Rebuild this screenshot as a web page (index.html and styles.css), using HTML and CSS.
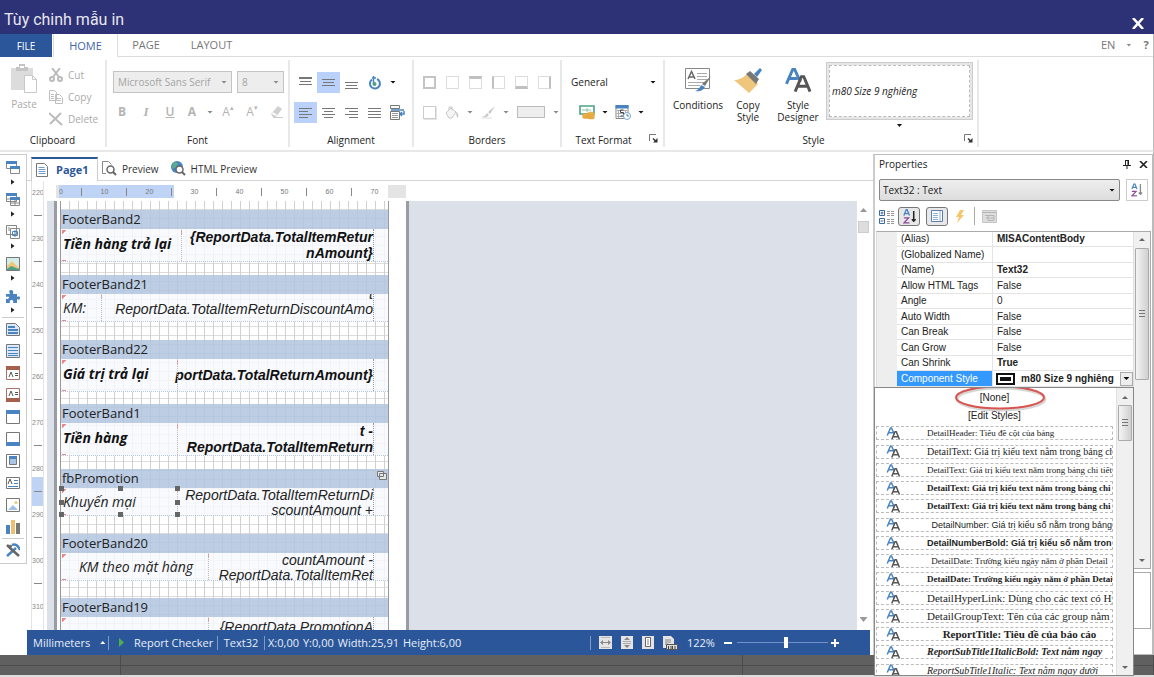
FILE: index.html
```html
<!DOCTYPE html>
<html lang="vi">
<head>
<meta charset="utf-8">
<title>Tùy chinh mẫu in</title>
<link rel="stylesheet" href="styles.css">
</head>
<body>
<svg class="defs" aria-hidden="true">
  <symbol id="aa" viewBox="0 0 28 26"><g fill="none" stroke-width="3"><path stroke="#4a84c0" d="M1.500 17 8 2h2l6 13M4 11.500h9"/><path stroke="#555" d="M10.500 25 17 9.500h2.500L26 25M13 19.500h11"/></g></symbol>
  <symbol id="launch" viewBox="0 0 9 9"><path fill="none" stroke="#777" d="M.5 7V.5H7"/><path fill="#333" d="M8.500 4v4.500H4L5.500 7 3.500 5l1-1 2 2z"/></symbol>
  <symbol id="sort" viewBox="0 0 14 16"><g fill="none" stroke-width="1.400"><path stroke="#4a84c0" d="M1 7 3.500.8h1L7 7M2 5h4"/><path stroke="#8c4a9c" d="M1 9.500h5L1.200 14.800H7"/></g></symbol>
  <symbol id="doc" viewBox="0 0 12 14"><path fill="#fff" stroke="#777" d="M.5.5h8l3 3v10H.5z"/><path stroke="#6d9bd0" d="M2.500 4.500h6m-6 2h7m-7 2h7m-7 2h7"/></symbol>
</svg>

<header class="titlebar">
  <h1>Tùy chinh mẫu in</h1>
  <button class="close" aria-label="Close"><svg width="12" height="11" viewBox="0 0 12 11"><path d="M1 0 11 11M11 0 1 11" stroke="#fff" stroke-width="2.600"/></svg></button>
</header>

<nav class="tabs">
  <button class="tab file">FILE</button>
  <button class="tab active">HOME</button>
  <button class="tab">PAGE</button>
  <button class="tab wide">LAYOUT</button>
  <span class="tabs-fill"></span>
  <button class="tab lang">EN <i class="caret small"></i></button>
  <button class="tab help" aria-label="Help">?</button>
</nav>

<section class="ribbon">
  <div class="group clipboard">
    <div class="group-body">
      <button class="paste"><svg width="26" height="30" viewBox="0 0 26 30"><path fill="#dcdcdc" d="M0 4h22v7h-8v15H0z"/><path fill="#c4c4c4" d="M5 3h3V0h6v3h3v4H5z"/><path fill="#fff" d="M9 2h4v2H9z"/><path fill="#fff" stroke="#c8c8c8" d="M13.500 11.500h8l4 4v13h-12z"/><path fill="none" stroke="#c8c8c8" d="M21.500 11.500v4h4"/></svg>Paste</button>
      <div class="stack">
        <button><svg width="14" height="14" viewBox="0 0 14 14"><g fill="none" stroke="#bbb" stroke-width="2"><path d="M3 0l7 9M11 0 4 9"/><circle cx="3" cy="11" r="2"/><circle cx="11" cy="11" r="2"/></g></svg>Cut</button>
        <button><svg width="14" height="14" viewBox="0 0 14 14"><g fill="#fff" stroke="#c0c0c0"><path d="M.5.5h5l2 2v8h-7zM6.500 4.500h4l3 3v6h-7z"/><path d="M2 4.500h3m-3 2h3m-3 2h3M8 8.500h4m-4 2h4"/></g></svg>Copy</button>
        <button><svg width="14" height="14" viewBox="0 0 14 14"><path d="M0 1 13 13M12 1 1 12" stroke="#bbb" stroke-width="2"/></svg>Delete</button>
      </div>
    </div>
    <div class="group-label">Clipboard</div>
  </div>

  <div class="group font">
    <div class="group-body rows">
      <div class="row fonts">
        <label class="combo family"><select aria-label="Font family"><option>Microsoft Sans Serif</option></select><i class="caret"></i></label>
        <label class="combo size"><select aria-label="Font size"><option>8</option></select><i class="caret"></i></label>
      </div>
      <div class="row glyphs">
        <button class="b">B</button><button class="i">I</button><button class="u">U</button><button class="b ink">A</button><i class="caret"></i>
        <button>A<sup>▴</sup></button><button>A<sup>▾</sup></button>
        <button aria-label="Clear"><svg width="13" height="12" viewBox="0 0 13 12"><path fill="#d0d0d0" d="M1 8 8 0l4 3-6 8H3z"/><path fill="#fff" d="m3 6 4 3-1 1-4-2z"/><path stroke="#ccc" d="M3 11.500h10"/></svg></button>
      </div>
    </div>
    <div class="group-label">Font</div>
  </div>

  <div class="group alignment">
    <div class="group-body rows">
      <div class="row cells">
        <button aria-label="Top"><svg width="13" height="13"><path stroke="#777" d="M0 1.500h13"/><path stroke="#777" d="M0 2.500h13M1 5.500h11M0 8.500h13"/></svg></button>
        <button class="on" aria-label="Middle"><svg width="13" height="13"><path stroke="#777" d="M0 3.500h13M1 6.500h11M0 9.500h13"/></svg></button>
        <button aria-label="Bottom"><svg width="13" height="13"><path stroke="#777" d="M0 6.500h13M1 9.500h11M0 12.500h13"/></svg></button>
        <button aria-label="Rotate"><svg width="14" height="15" viewBox="0 0 14 15"><path fill="none" stroke="#4a84c0" stroke-width="2" d="M4 4.500A5 5 0 1 0 9 4"/><path fill="none" stroke="#4a84c0" stroke-width="1.500" d="M4 3h4M5.500 1v8"/><circle cx="6.500" cy="9" r="2" fill="#4ca384"/></svg></button>
        <i class="caret dark"></i>
      </div>
      <div class="row cells">
        <button class="on" aria-label="Left"><svg width="13" height="13"><path stroke="#777" d="M0 2.500h13M0 5.500h9M0 8.500h13M0 11.500h9"/></svg></button>
        <button aria-label="Center"><svg width="13" height="13"><path stroke="#777" d="M0 2.500h13M2 5.500h9M0 8.500h13M2 11.500h9"/></svg></button>
        <button aria-label="Right"><svg width="13" height="13"><path stroke="#777" d="M0 2.500h13M4 5.500h9M0 8.500h13M4 11.500h9"/></svg></button>
        <button aria-label="Justify"><svg width="13" height="13"><path stroke="#777" d="M0 2.500h13M0 5.500h13M0 8.500h13M0 11.500h13"/></svg></button>
        <button aria-label="Wrap"><svg width="15" height="15" viewBox="0 0 15 15"><path fill="#fff" stroke="#777" d="M.5.500h9v3h-9zM.5 6.500h9v8h-9z"/><path stroke="#999" d="M2 8.500h6m-6 2h6m-6 2h6"/><path fill="none" stroke="#4a84c0" stroke-width="1.500" d="M1 5h13M14 6v3h-4m2-2-2 2 2 2"/></svg></button>
      </div>
    </div>
    <div class="group-label">Alignment</div>
  </div>

  <div class="group borders">
    <div class="group-body rows">
      <div class="row cells">
        <button aria-label="All borders"><i class="box all"></i></button>
        <button aria-label="No border"><i class="box"></i></button>
        <button aria-label="Top border"><i class="box t"></i></button>
        <button aria-label="Left border"><i class="box l"></i></button>
        <button aria-label="Bottom border"><i class="box bt"></i></button>
        <button aria-label="Right border"><i class="box r"></i></button>
      </div>
      <div class="row paint">
        <button class="cell" aria-label="Shadow"><i class="box sh"></i></button>
        <button aria-label="Fill"><svg width="14" height="13" viewBox="0 0 14 13"><path fill="#f4f4f4" stroke="#c8c8c8" d="m1 7 5-5 5 4-4 6H4zM4 4V1h3v3"/><path fill="#c4c4c4" d="M11 6q3 1 2 6-2-2-2-6z"/></svg></button><i class="caret"></i>
        <button aria-label="Border colour"><svg width="14" height="13" viewBox="0 0 14 13"><path fill="#c8c8c8" d="M14 0 9 8l-2-2zM6 7l2 2q-2 3-8 2 4 0 6-4z"/><path stroke="#ddd" d="M1 12h10"/></svg></button><i class="caret"></i>
        <button aria-label="Border style"><i class="swatch"></i></button><i class="caret"></i>
      </div>
    </div>
    <div class="group-label">Borders</div>
  </div>

  <div class="group format">
    <div class="group-body rows">
      <div class="row"><label class="combo plain"><select aria-label="Text format"><option>General</option></select><i class="caret dark"></i></label></div>
      <div class="row formats">
        <button aria-label="Currency"><svg width="16" height="15" viewBox="0 0 16 15"><path fill="#fff" stroke="#4ca384" stroke-width="1.600" d="M1 1h14v8H1z"/><path stroke="#8cc4ae" d="M3 5h9M8 3v4"/><g fill="#ecb24a" stroke="#d8942c" stroke-width=".5"><ellipse cx="12" cy="12.500" rx="3.500" ry="1.500"/><ellipse cx="12" cy="10.500" rx="3.500" ry="1.500"/><ellipse cx="12" cy="8.500" rx="3.500" ry="1.500"/><ellipse cx="7" cy="12" rx="3.500" ry="1.500"/><ellipse cx="6.500" cy="10" rx="3" ry="1.500"/></g></svg></button><i class="caret dark"></i>
        <button aria-label="Date"><svg width="16" height="15" viewBox="0 0 16 15"><path fill="#fff" stroke="#888" d="M1 .5h12v13H1z"/><path fill="#4a84c0" d="M.5 0h13v3.500H.5z"/><path stroke="#aaa" d="M2 5.500h10M2 8.500h10M2 11.500h8M3.500 5v8M10.500 5v4"/><path fill="none" stroke="#444" d="M8.500 5h-3v2.500h3V11h-3"/><circle cx="12" cy="11" r="3.500" fill="#fff" stroke="#7da6d4"/><path fill="none" stroke="#4a84c0" d="M12 9v2h2"/></svg></button><i class="caret dark"></i>
      </div>
    </div>
    <div class="group-label">Text Format<button class="launcher" aria-label="Text format options"><svg width="9" height="9"><use href="#launch"/></svg></button></div>
  </div>

  <div class="group style">
    <div class="group-body">
      <button class="big"><svg width="26" height="26" viewBox="0 0 26 26"><path fill="#fff" stroke="#888" d="M.5 1.500h24v20H.5z"/><path stroke="#aaa" d="M12 6.500h10M12 9.500h10M12 12.500h10M3 15.500h18M3 18.500h12"/><path fill="none" stroke="#666" stroke-width="1.500" d="M3 12 6.500 4.500 10 12M4.500 10h4"/><path fill="#777" d="m26 9-6 10-3-2z"/><path fill="#4a84c0" d="m16 18 4 2q-2 5-10 4 4-1 6-6z"/></svg>Conditions</button>
      <button class="big"><svg width="28" height="26" viewBox="0 0 28 26"><path fill="#eec77c" d="M0 13q7 0 13-6l11 10-9 9z"/><path fill="#777" d="m12 7 4-3 9 8-3 5z"/><path fill="#4a84c0" d="m20 7 6-6 2 2-5 7z"/></svg>Copy<br>Style</button>
      <button class="big"><svg width="27" height="26"><use href="#aa"/></svg>Style<br>Designer</button>
      <div class="gallery-wrap">
        <button class="gallery"><span>m80 Size 9 nghiêng</span></button>
        <i class="caret dark small"></i>
      </div>
    </div>
    <div class="group-label">Style<button class="launcher" aria-label="Style options"><svg width="9" height="9"><use href="#launch"/></svg></button></div>
  </div>
</section>

<main class="workspace">
  <aside class="toolbox">
    <button><svg viewBox="0 0 14 14"><path fill="#fff" stroke="#888" d="M.5.5h10v7H.5zM4.500 5.500h9v7h-9z"/><path fill="#4a84c0" d="M0 0h11v3H0zM4 5h10v3H4z"/></svg></button><i class="more"></i>
    <button><svg viewBox="0 0 14 14"><path fill="#fff" stroke="#888" d="M.5.5h10v8H.5zM4.500 4.500h9v8h-9zM4 10h10M9 5v8M1 6h4"/><path fill="#4a84c0" d="M0 0h11v3H0zM4 4h10v3H4z"/></svg></button><i class="more"></i>
    <button><svg viewBox="0 0 14 14"><path fill="#fff" stroke="#888" d="M.5.5h10v9H.5zM4.500 3.500h9v10h-9z"/><path stroke="#888" d="M2 3h2M2 5h2"/><path fill="none" stroke="#4a84c0" d="M6.500 6.500h5v4h-5zM9 5v7"/></svg></button><i class="more"></i>
    <button><svg viewBox="0 0 14 14"><path fill="#d3eeea" stroke="#777" d="M.5.500h13v13H.5z"/><path fill="#eec77c" d="m1 9 5-5 7 7v2H1z"/><path fill="#4ca384" d="m1 12 4-3 8 3v1H1z"/></svg></button><i class="more"></i>
    <button><svg viewBox="0 0 14 14"><path fill="#4a84c0" d="M0 5h4Q2 1 5 1t2 4h4v3q3-2 3 1t-3 1v4H7q1-3-1.500-3T4 14H0v-4q3 0 3-1.500T0 8z"/></svg></button><i class="more"></i>
    <hr>
    <button><svg viewBox="0 0 14 14"><path fill="#dce9f8" stroke="#777" d="M.5 1.500h9l4 4v8H.5z"/><path stroke="#4a84c0" stroke-width="2" d="M2 5h7M2 8h10M2 11h10"/></svg></button>
    <button><svg viewBox="0 0 14 14"><path fill="#dce9f8" stroke="#777" d="M.5.500h13v13H.5z"/><path stroke="#4a84c0" d="M2 3.500h10M2 6.500h10M2 9.500h10M2 11.500h10"/></svg></button>
    <button><svg viewBox="0 0 14 14"><path fill="#fff" stroke="#a87068" d="M.5.500h13v13H.5z"/><path fill="#a6604e" d="M0 0h14v4H0z"/><path fill="none" stroke="#555" d="m3 11 2-5 2 5M9 7.500h3M9 9.500h3"/></svg></button>
    <button><svg viewBox="0 0 14 14"><path fill="#fff" stroke="#a87068" d="M.5.500h13v13H.5z"/><path fill="#a6604e" d="M0 10h14v4H0z"/><path fill="none" stroke="#555" d="m3 8 2-5 2 5M9 4.500h3M9 6.500h3"/></svg></button>
    <button><svg viewBox="0 0 14 14"><path fill="#fff" stroke="#777" d="M.5.500h13v13H.5z"/><path fill="#4a84c0" d="M0 0h14v4H0z"/></svg></button>
    <button><svg viewBox="0 0 14 14"><path fill="#fff" stroke="#777" d="M.5.500h13v13H.5z"/><path fill="#4a84c0" d="M0 10h14v4H0z"/></svg></button>
    <button><svg viewBox="0 0 14 14"><path fill="#fff" stroke="#777" d="M.5.500h13v13H.5z"/><path fill="#a9c6e6" stroke="#777" d="M3.500 3.500h7v7h-7z"/><path fill="#4a84c0" d="M3 2h8v3H3z"/></svg></button>
    <button><svg viewBox="0 0 14 14"><path fill="#fff" stroke="#777" d="M.5 1.500h13v11H.5z"/><path fill="none" stroke="#555" d="m2 8 2-5 2 5"/><path stroke="#4a84c0" d="M8 4.500h4M8 7.500h4M2 10.500h10"/></svg></button>
    <button><svg viewBox="0 0 14 14"><path fill="#fff" stroke="#777" d="M.5.500h13v13H.5z"/><path fill="#9fc0e4" d="m2 12 5-5 5 5z"/><circle cx="10" cy="4.500" r="1.500" fill="#eec77c"/></svg></button>
    <button><svg viewBox="0 0 14 14"><path fill="#4a84c0" d="M0 5h4v9H0z"/><path fill="#eebf6c" d="M5 0h4v14H5z"/><path fill="#777" d="M10 3h4v11h-4z"/></svg></button>
    <hr>
    <button><svg viewBox="0 0 14 14"><path stroke="#4a84c0" stroke-width="2.500" d="m1 13 9-8M6 2q5-2 8 5" fill="none"/><path fill="none" stroke="#666" stroke-width="2.500" d="m4 5 9 8M1 2l3 3 1-3"/></svg></button>
  </aside>

  <section class="designer">
    <nav class="doc-tabs">
      <button class="current"><svg width="12" height="14"><use href="#doc"/></svg>Page1</button>
      <button><svg width="15" height="15" viewBox="0 0 15 15"><path fill="none" stroke="#888" d="M4 12.500H.5V.500h6l3 3"/><circle cx="8.500" cy="8.500" r="3.500" fill="#fff" stroke="#666" stroke-width="1.500"/><path stroke="#666" stroke-width="2" d="m11 11 3 3"/></svg>Preview</button>
      <button><svg width="15" height="15" viewBox="0 0 15 15"><circle cx="6" cy="6" r="6" fill="#4a84c0"/><path fill="#5caf8a" d="M2 2q4-2 5 1L5 6 1 8z"/><circle cx="8.500" cy="8.500" r="3.500" fill="#fff" stroke="#666" stroke-width="1.500"/><path stroke="#666" stroke-width="2" d="m11 11 3 3"/></svg>HTML Preview</button>
    </nav>
    <div class="sheet">
      <div class="vruler">
        <span>220</span><i></i><span>230</span><i></i><span>240</span><i></i><span>250</span><i></i><span>260</span><i></i><span>270</span><i></i><span>280</span><i class="sel"></i><span>290</span><i></i><span>300</span><i></i><span>310</span>
      </div>
      <div class="view">
        <div class="hruler"><div class="scale"><span>0</span><span>10</span><span>20</span><span>30</span><span>40</span><span>50</span><span>60</span><span>70</span></div></div>
        <div class="canvas">
          <div class="page">
            <div class="printable">
              <section class="band"><h2>FooterBand2</h2><div class="band-body">
                <div class="fields tall"><div class="fld w121 strong">Tiền hàng trả lại</div><div class="expr strong">{ReportData.TotalItemRetur<br>nAmount}</div></div></div></section>
              <section class="band"><h2>FooterBand21</h2><div class="band-body">
                <div class="fields"><div class="fld w41">KM:</div><div class="expr last">t<br>ReportData.TotalItemReturnDiscountAmo</div></div></div></section>
              <section class="band short"><h2>FooterBand22</h2><div class="band-body">
                <div class="fields tall"><div class="fld w117 strong">Giá trị trả lại</div><div class="expr strong mid">portData.TotalReturnAmount}</div></div></div></section>
              <section class="band"><h2>FooterBand1</h2><div class="band-body">
                <div class="fields tall"><div class="fld w117 strong">Tiền hàng</div><div class="expr strong">t -<br>ReportData.TotalItemReturn</div></div></div></section>
              <section class="band"><h2>fbPromotion<svg width="10" height="9" viewBox="0 0 10 9"><path fill="#e8e8e8" stroke="#777" d="M.5.500h6v5h-6zM2.500 2.500h7v6h-7z"/></svg></h2><div class="band-body">
                <div class="fields"><div class="fld w117 picked">Khuyến mại<b class="h a"></b><b class="h c"></b><b class="h d"></b><b class="h e"></b><b class="h f"></b><b class="h g"></b><b class="h k"></b><b class="h m"></b></div><div class="expr">ReportData.TotalItemReturnDi<br>scountAmount +</div></div></div></section>
              <section class="band short"><h2>FooterBand20</h2><div class="band-body">
                <div class="fields"><div class="fld w148 indent">KM theo mặt hàng</div><div class="expr">countAmount -<br>ReportData.TotalItemRet</div></div></div></section>
              <section class="band"><h2>FooterBand19</h2><div class="band-body">
                <div class="fields"><div class="fld w148"></div><div class="expr lead">{ReportData.PromotionA</div></div></div></section>
            </div>
          </div>
        </div>
      </div>
      <div class="vscroll"><i class="up"></i><i class="thumb"></i><i class="down"></i></div>
    </div>
    <footer class="status">
      <button class="unit">Millimeters <i class="up"></i></button>
      <button class="check"><i class="play"></i>Report Checker</button>
      <span class="name">Text32</span>
      <span class="pos"><span>X:0,00</span><span>Y:0,00</span><span>Width:25,91</span><span>Height:6,00</span></span>
      <span class="zooms">
        <button aria-label="Page width"><svg width="13" height="13" viewBox="0 0 13 13"><path fill="#e4e4e4" d="M0 0h13v13H0z"/><path fill="#888" d="M1 6.500 4 4v5zM12 6.500 9 4v5zM4 6h5v1H4z"/><path stroke="#bbb" d="M2 1.500h9M2 11.500h9"/></svg></button>
        <button aria-label="Page height"><svg width="12" height="13" viewBox="0 0 12 13"><path fill="#e4e4e4" d="M0 0h12v13H0z"/><path fill="#888" d="m6 1 3 3H3zM6 12l3-3H3z"/><path stroke="#aaa" d="M2 5.500h8M2 7.500h8"/></svg></button>
        <button aria-label="Whole page"><svg width="12" height="13" viewBox="0 0 12 13"><path fill="#e4e4e4" d="M0 0h12v13H0z"/><path fill="#fff" stroke="#666" d="M3.500 1.500h5v9h-5z"/><path stroke="#888" d="M5 4h2M5 6h2M5 8h2"/></svg></button>
        <button aria-label="Actual size"><svg width="15" height="14" viewBox="0 0 15 14"><path fill="#e4e4e4" d="M0 0h8l3 3v9H0z"/><path stroke="#888" d="M2 4h6M2 6h6M2 8h3"/><path fill="#ddd" stroke="#555" d="M3.500 8.500h11v5h-11z"/><path stroke="#444" d="M5.500 10v3M8 10v3m1.500-3v3M12 10v3"/></svg></button>
        <span class="pct">122%</span>
        <button class="sign" aria-label="Zoom out"><svg width="8" height="8"><path stroke="#fff" stroke-width="2" d="M0 4h8"/></svg></button>
        <input type="range" aria-label="Zoom" min="0" max="100" value="54">
        <button class="sign" aria-label="Zoom in"><svg width="8" height="8"><path stroke="#fff" stroke-width="2" d="M0 4h8M4 0v8"/></svg></button>
      </span>
    </footer>
  </section>

  <aside class="properties">
    <div class="panel-head"><h2>Properties</h2>
      <button aria-label="Pin"><svg width="8" height="9" viewBox="0 0 8 9"><path fill="none" stroke="#222" d="M2.500.500h3v4M2.500 0v5M0 5.500h8M4 5v4"/><path stroke="#222" stroke-width="1.500" d="M5.200 0v5"/></svg></button>
      <button aria-label="Close panel"><svg width="9" height="7"><path stroke="#222" stroke-width="1.600" d="m1 0 7 7M8 0 1 7"/></svg></button></div>
    <div class="object-row">
      <label class="object"><select aria-label="Object"><option>Text32 : Text</option></select><i class="caret dark"></i></label>
      <button class="sorter" aria-label="Sort"><svg width="12" height="16" viewBox="0 0 14 16"><use href="#sort" width="14" height="16"/><path stroke="#888" stroke-width="1.500" d="M11 1v12m-2-2 2 2 2-2" fill="none"/></svg></button>
    </div>
    <div class="prop-tools">
      <button aria-label="Categorized"><svg width="15" height="15" viewBox="0 0 15 15"><path fill="#fff" stroke="#3c6aa0" d="M.5 1.500h5v5h-5zM.5 9.500h5v5h-5z"/><path stroke="#3c6aa0" d="M1.500 4h3M3 2.500v3M1.500 12h3"/><path stroke="#999" stroke-dasharray="3 1" d="M8 2.500h7M8 4.500h7M8 6.500h7M8 10.500h7M8 12.500h7M8 14.500h7"/></svg></button>
      <button class="down" aria-label="Alphabetical"><svg width="15" height="15" viewBox="0 0 14 16"><use href="#sort" width="14" height="16"/><path stroke="#222" stroke-width="1.600" d="M11.500 2v11m-2-2 2 2 2-2" fill="none"/></svg></button>
      <button class="down tab-view" aria-label="Properties tab"><svg width="12" height="12" viewBox="0 0 12 12"><path fill="#fff" stroke="#5a7fae" d="M.5.500h11v11H.5z"/><path stroke="#8fb2dc" d="M2 3.500h5m-5 2h5m-5 2h5m-5 2h5M9 1v10"/></svg></button>
      <button aria-label="Events"><svg width="10" height="13" viewBox="0 0 10 13"><path fill="#f7c56c" d="M5 0h4L6 5h3L2 13l2-6H1z"/></svg></button>
      <span class="vsep"></span>
      <button aria-label="Property pages"><svg width="15" height="13" viewBox="0 0 15 13"><path fill="#dedede" stroke="#c4c4c4" d="M.5.500h14v12H.5z"/><path stroke="#b4b4b4" d="M1 2.500h13M3 5.500h3v5h6v-5H6M4 8h8" fill="none"/></svg></button>
    </div>
    <div class="prop-grid">
      <div class="table-wrap">
        <table>
          <tr><th></th><td>(Alias)</td><td><b>MISAContentBody</b></td></tr>
          <tr><th></th><td>(Globalized Name)</td><td></td></tr>
          <tr><th></th><td>(Name)</td><td><b>Text32</b></td></tr>
          <tr><th></th><td>Allow HTML Tags</td><td>False</td></tr>
          <tr><th></th><td>Angle</td><td>0</td></tr>
          <tr><th></th><td>Auto Width</td><td>False</td></tr>
          <tr><th></th><td>Can Break</td><td>False</td></tr>
          <tr><th></th><td>Can Grow</td><td>False</td></tr>
          <tr><th></th><td>Can Shrink</td><td><b>True</b></td></tr>
          <tr class="sel"><th></th><td>Component Style</td><td><div class="editor"><i class="chip"></i><b>m80 Size 9 nghiêng</b><button aria-label="Open list"><i class="caret dark"></i></button></div></td></tr>
        </table>
        <div class="menu">
          <div class="options">
            <button class="plain">[None]</button>
            <button class="plain">[Edit Styles]</button>
            <button><svg><use href="#aa"/></svg><span>DetailHeader: Tiêu đề cột của bảng</span></button>
            <button class="s10"><svg><use href="#aa"/></svg><span>DetailText: Giá trị kiểu text nằm trong bảng chi t</span></button>
            <button><svg><use href="#aa"/></svg><span>DetailText: Giá trị kiểu text nằm trong bảng chi tiết</span></button>
            <button class="bold"><svg><use href="#aa"/></svg><span>DetailText: Giá trị kiểu text nằm trong bảng chi ti</span></button>
            <button class="bold"><svg><use href="#aa"/></svg><span>DetailText: Giá trị kiểu text nằm trong bảng chi t</span></button>
            <button class="sans right"><svg><use href="#aa"/></svg><span>DetailNumber: Giá trị kiểu số nằm trong bảng</span></button>
            <button class="sans bold"><svg><use href="#aa"/></svg><span>DetailNumberBold: Giá trị kiểu số nằm tron</span></button>
            <button class="center"><svg><use href="#aa"/></svg><span>DetailDate: Trường kiểu ngày nằm ở phần Detail</span></button>
            <button class="bold"><svg><use href="#aa"/></svg><span>DetailDate: Trường kiểu ngày nằm ở phần Detail</span></button>
            <button class="s11"><svg><use href="#aa"/></svg><span>DetailHyperLink: Dùng cho các text có Hyp</span></button>
            <button class="s11"><svg><use href="#aa"/></svg><span>DetailGroupText: Tên của các group nằm tr</span></button>
            <button class="bold center s11"><svg><use href="#aa"/></svg><span>ReportTitle: Tiêu đề của báo cáo</span></button>
            <button class="bold ital s10"><svg><use href="#aa"/></svg><span>ReportSubTitle1ItalicBold: Text nằm ngay</span></button>
            <button class="ital s10"><svg><use href="#aa"/></svg><span>ReportSubTitle1Italic: Text nằm ngay dưới</span></button>
          </div>
          <div class="bar"><i class="up"></i><i class="grip"></i><i class="down"></i></div>
          <svg class="ring" width="94" height="28" viewBox="0 0 94 28"><ellipse cx="47" cy="14" rx="44" ry="11" fill="none" stroke="#999" stroke-opacity=".4" stroke-width="3"/><ellipse cx="46" cy="12.500" rx="44" ry="11" fill="none" stroke="#d9534f" stroke-width="2"/></svg>
        </div>
      </div>
      <div class="bar"><i class="up"></i><i class="grip long"></i><i class="down"></i></div>
    </div>
    <div class="hint"></div>
  </aside>
</main>
<footer class="backdrop"><i></i><i></i><i></i></footer>
</body>
</html>
```

FILE: styles.css
```css
* { box-sizing: border-box; }
body { margin: 0; height: 100vh; display: flex; flex-direction: column; overflow: hidden; background: #fff; color: #333; font: 10px/12px "Open Sans", "Noto Sans", sans-serif; }
button, select { font: inherit; color: inherit; background: none; border: 0; padding: 0; margin: 0; }
h1, h2 { margin: 0; font-weight: normal; }
svg { display: block; flex: none; }
.defs { position: absolute; width: 0; height: 0; }

.caret { flex: none; width: 6px; height: 3px; background: #888; clip-path: polygon(0 0, 100% 0, 50% 100%); }
.caret.dark { background: #111; }
.caret.small { width: 5px; }
i.up { flex: none; width: 7px; height: 4px; background: #999; clip-path: polygon(50% 0, 100% 100%, 0 100%); }
i.down { flex: none; width: 8px; height: 5px; background: #999; clip-path: polygon(0 0, 100% 0, 50% 100%); }

.titlebar { flex: none; height: 34px; background: #2d3175; color: #e6e6f0; display: flex; justify-content: space-between; padding: 8px 10px 0 4px; }
.titlebar h1 { font: 16px/24px Roboto, "Open Sans", sans-serif; }
.close { align-self: center; padding-top: 4px; }

.tabs { flex: none; display: flex; height: 23px; font-size: 11px; color: #777; border-right: 1px solid #bbb; }
.tab { width: 56px; border-bottom: 1px solid #ddd; }
.tab.file { width: 52px; background: #2b579a; color: #fff; border: 0; font-size: 10px; }
.tab.active { width: 65px; margin-left: 1px; border: 1px solid #ddd; border-width: 0 1px; color: #3f66ad; }
.tab.wide { width: 75px; }
.tabs-fill { flex: 1; border-bottom: 1px solid #ddd; }
.tab.lang { width: 38px; display: flex; align-items: center; gap: 11px; }
.tab.help { width: 14px; font-weight: 700; }

.ribbon { flex: none; height: 95px; display: flex; padding: 3px 0; border-bottom: 2px solid #e8e8e8; border-right: 1px solid #bbb; color: #222; }
.group { flex: none; display: flex; flex-direction: column; border-right: 2px solid #e8e8e8; }
.group-body { flex: 1; display: flex; }
.group-label { height: 16px; padding-top: 3px; display: flex; justify-content: center; }
.clipboard { width: 107px; } .font { width: 183px; } .alignment { width: 124px; } .borders { width: 148px; } .format { width: 103px; } .style { width: 314px; }
.rows { flex-direction: column; padding-top: 11px; gap: 8px; }
.row { display: flex; height: 22px; align-items: center; }

.clipboard .group-body { color: #aaa; padding: 4px 0 0 11px; gap: 12px; }
.paste { display: flex; flex-direction: column; align-items: center; justify-content: flex-start; gap: 4px; }
.stack { display: flex; flex-direction: column; }
.stack button { height: 22px; display: flex; align-items: center; gap: 5px; }

.combo { display: grid; align-items: center; justify-items: end; height: 22px; }
.combo select, .combo .caret { grid-area: 1 / 1; }
.combo .caret, .object .caret { margin-right: 5px; pointer-events: none; }
.combo select { appearance: none; width: 100%; height: 100%; border: 1px solid #c4c4c4; background: #ededed; color: #a4a4a4; padding-left: 4px; }
.font .rows { padding-left: 3px; }
.fonts { gap: 5px; padding-left: 3px; }
.family { width: 119px; } .size { width: 47px; }
.glyphs { color: #b4b4b4; font: 12px/14px "Open Sans", sans-serif; }
.glyphs button { width: 24px; display: grid; grid-auto-flow: column; justify-content: center; }
.glyphs .ink { width: 20px; }
.glyphs .caret { margin: 0 3px 0 5px; }
.b { font-weight: 700; } .i { font: italic 700 13px "Liberation Serif", serif; } .u { font-weight: 600; text-decoration: underline; }
sup { font-size: 7px; line-height: 6px; vertical-align: top; }

.alignment .rows { padding-left: 4px; }
.cells button, .cell { width: 23px; height: 21px; display: grid; place-items: center; flex: none; }
.cells .on { background: #bad2fb; }
.cells .caret { margin-left: 4px; }

.borders .rows { padding-left: 4px; }
.box { width: 13px; height: 13px; border: 1px solid #ddd; display: block; }
.all { border: 2px solid #c4c4c4; } .t { border-top: 3px solid #c0c0c0; } .l { border-left: 2px solid #c0c0c0; } .bt { border-bottom: 3px solid #c0c0c0; } .r { border-right: 2px solid #c0c0c0; } .sh { border-color: #ccc; box-shadow: 1px 1px #e4e4e4; }
.paint { gap: 8px; }
.paint .cell { margin-right: -4px; }
.swatch { display: block; width: 28px; height: 12px; background: #eee; border: 1px solid #bbb; }

.format .rows { padding: 11px 2px 0 9px; }
.plain select { border: 0; background: none; color: #222; padding: 0; }
.combo.plain { width: 91px; }
.formats { gap: 7px; padding-left: 8px; }
.format .group-label { padding-left: 8px; gap: 17px; }
.launcher { padding-bottom: 4px; }

.style .group-body { padding-left: 9px; gap: 2px; }
.big { display: flex; flex-direction: column; align-items: center; justify-content: flex-start; gap: 6px; padding-top: 7px; width: 48px; line-height: 12px; }
.gallery-wrap { margin: 2px 4px 0 auto; width: 147px; display: flex; flex-direction: column; align-items: center; gap: 4px; }
.gallery { width: 100%; height: 58px; border: 1px solid #ccc; background: #e6e6e6; padding: 2px; font-style: italic; }
.gallery span { display: flex; align-items: center; height: 100%; background: #fff; border: 1px dashed #bbb; padding-left: 2px; }
.style .group-label { padding-left: 133px; gap: 139px; }

.workspace { flex: 1; min-height: 0; display: flex; border-right: 1px solid #bbb; }
.toolbox { width: 27px; flex: none; align-self: flex-start; margin-top: 2px; padding: 2px 1px 2px 0; border: solid #ccc; border-width: 1px 1px 1px 0; display: flex; flex-direction: column; align-items: center; }
.toolbox button { height: 22px; display: grid; place-items: center; }
.toolbox button svg { width: 14px; height: 14px; }
.toolbox hr { width: 22px; margin: 0; border: 0; border-top: 1px solid #ccc; }
.more { width: 4px; height: 6px; margin: 0 0 4px; background: #222; clip-path: polygon(0 0, 100% 50%, 0 100%); }

.designer { flex: 1; min-width: 0; display: flex; flex-direction: column; }
.doc-tabs { flex: none; height: 29px; display: flex; padding: 5px 0 0 4px; border-bottom: 1px solid #d4d4d4; }
.doc-tabs button { display: flex; align-items: center; gap: 5px; padding: 0 4px; margin-right: 4px; }
.doc-tabs .current { width: 67px; gap: 8px; margin: 0 0 -1px; background: #fff; border: 1px solid #ccc; border-width: 2px 1px 0; border-top-color: #2b579a; color: #2b579a; font-size: 11px; font-weight: 700; }
.sheet { flex: 1; min-height: 0; display: flex; }
.vruler { width: 13px; margin: 0 3px 0 4px; overflow: hidden; border: solid #e4e4e4; border-width: 0 1px; display: flex; flex-direction: column; color: #888; font: 7px "Liberation Sans", sans-serif; }
.vruler span, .vruler i { flex: none; height: 23px; display: grid; place-items: center; }
.vruler i::before { content: ""; width: 8px; height: 1px; background: #888; }
.vruler .sel { height: 29px; margin: -3px 0; background: #bfd3f4; }
.view { flex: 1; min-width: 0; display: flex; flex-direction: column; }
.hruler { margin: 4px 0 3px 9px; width: 350px; padding-left: 3px; background: #e4e4e4; }
.scale { width: 329px; height: 13px; overflow: hidden; display: flex; color: #777; font: 7px/13px "Liberation Sans", sans-serif; background: linear-gradient(90deg, #bfd3f4 115px, #fff 115px); }
.scale span { flex: none; width: 45px; text-align: center; background: linear-gradient(#888, #888) right center / 1px 8px no-repeat; }
.scale span:first-child { width: 23px; text-align: left; }
.canvas { flex: 1; min-height: 0; overflow: hidden; background: #dce1e9; padding-left: 7px; }
.page { width: 355px; height: 100%; overflow: hidden; background: #fff; border: solid #999da3; border-width: 0 3px; padding-left: 3px; }
.printable { width: 329px; padding-top: 9px; border: 1px solid #999; border-width: 0 1px; background: repeating-linear-gradient(90deg, transparent 0 8px, #d0d0d0 8px 9px), repeating-linear-gradient(transparent 0 8px, #dcdcdc 8px 9px); }
.band h2 { height: 19px; padding-left: 1px; background: rgba(177, 197, 224, .86); color: #222; font-size: 13px; line-height: 18px; display: flex; justify-content: space-between; }
.band h2 svg { margin: 2px 1px 0; }
.band-body { height: 46px; }
.short .band-body { height: 45px; }
.fields { height: 28px; display: flex; padding-right: 14px; background: rgba(246, 249, 254, .82); border-bottom: 1px dotted #b8c8e0; color: #222; }
.fields.tall { height: 33px; }
.fld { flex: none; padding-left: 1px; font: italic 14px/25px "Open Sans", sans-serif; border: 1px solid transparent; border-right: 1px dotted #bbb; background: linear-gradient(135deg, #e88 3px, transparent 3px); position: relative; white-space: nowrap; }
.w121 { width: 121px; } .w41 { width: 41px; } .w117 { width: 117px; } .w148 { width: 148px; }
.fld.indent { padding-left: 17px; }
.fld.strong { line-height: 28px; }
.strong { font-weight: 700; color: #111; }
.expr { flex: 1; min-width: 0; display: flex; flex-direction: column; align-items: flex-end; text-align: right; white-space: nowrap; font: italic 14px/15px "Liberation Sans", sans-serif; border-right: 1px dotted #999; }
.expr.strong { font-weight: 700; line-height: 16px; }
.expr.mid { line-height: 32px; }
.expr.last { justify-content: flex-end; padding-bottom: 4px; overflow: hidden; }
.expr.lead { padding-top: 3px; }
.h { position: absolute; width: 5px; height: 5px; background: #666; }
.a, .c, .d { top: -3px; } .e, .f { top: 11px; } .g, .k, .m { bottom: -3px; }
.a, .e, .g { left: -3px; } .c, .k { left: 56px; } .d, .f, .m { right: -3px; }
.vscroll { width: 13px; margin: 20px 3px 0 0; display: flex; flex-direction: column; align-items: center; padding: 7px 0 8px; }
.vscroll .thumb { width: 11px; height: 12px; margin-top: 9px; background: #ddd; border: 1px solid #ccc; }
.vscroll .down { margin-top: auto; }

.status { flex: none; height: 25px; margin-right: 3px; background: #2b579a; color: #e8eef8; font-size: 11px; display: flex; align-items: center; white-space: nowrap; }
.status > * { border-right: 1px solid #7f9cc8; height: 14px; line-height: 14px; }
.status button { display: flex; align-items: center; }
.unit { width: 82px; gap: 10px; padding-left: 6px; }
.status i.up { width: 5px; height: 3px; background: #fff; }
.check { width: 109px; gap: 10px; padding-left: 10px; }
.play { width: 5px; height: 9px; background: #4caf50; clip-path: polygon(0 0, 100% 50%, 0 100%); }
.name { width: 47px; text-align: center; }
.pos { flex: 1; display: flex; gap: 4px; padding-left: 3px; }
.zooms { display: flex; align-items: center; gap: 9px; padding: 0 31px 0 8px; border: 0; }
.pct { width: 28px; }
.sign { height: 14px; }
input[type=range] { appearance: none; width: 91px; height: 12px; margin: 0 -6px 0 -4px; background: linear-gradient(#6f92cc, #6f92cc) center / 100% 1px no-repeat; }
input[type=range]::-webkit-slider-thumb { appearance: none; width: 4px; height: 11px; background: #fff; }

.properties { flex: none; width: 280px; margin-top: 2px; border: 1px solid #bbb; border-left: 2px solid #ccc; background: #fff; display: flex; flex-direction: column; padding: 0 1px 0 1px; }
.panel-head { height: 18px; display: flex; align-items: center; gap: 8px; padding: 0 3px; }
.panel-head h2 { flex: 1; font-size: 10px; color: #222; }
.object-row { display: flex; gap: 6px; padding: 6px 3px 0; }
.object { flex: 1; display: grid; align-items: center; justify-items: end; height: 22px; }
.object select, .object .caret { grid-area: 1 / 1; }
.object select { appearance: none; width: 100%; height: 22px; padding-left: 3px; border: 1px solid #888; border-radius: 2px; background: linear-gradient(#eee, #ddd); color: #222; }
.sorter { width: 22px; height: 22px; border: 1px solid #ccc; display: grid; place-items: center; }
.prop-tools { display: flex; align-items: center; height: 30px; padding: 0 4px 0 1px; gap: 2px; }
.prop-tools button { width: 19px; height: 19px; display: grid; place-items: center; }
.prop-tools button.down { width: 22px; border: 1px solid #777; border-radius: 3px; background: #e8e8e8; }
.prop-tools .tab-view { margin-left: 4px; }
.vsep { width: 1px; height: 18px; background: #aaa; margin: 0 3px; }
.prop-grid { flex: none; height: 338px; display: flex; border: 1px solid #aaa; border-left-color: #ddd; }
.table-wrap { flex: 1; align-self: flex-start; position: relative; }
table { width: 100%; table-layout: fixed; border-collapse: separate; border-spacing: 0; font: 10px/14px "Liberation Sans", sans-serif; color: #222; }
th { width: 20px; background: #eee; }
td { padding: 0 0 0 4px; border-bottom: 1px solid #e4e4e4; height: 15px; white-space: nowrap; }
td:nth-child(2) { width: 96px; border-right: 1px solid #e4e4e4; }
tr:nth-child(even) td { line-height: 15px; }
tr.sel td:nth-child(2) { background: #3399ff; color: #fff; }
tr.sel td:nth-child(3) { padding: 0; }
.editor { display: flex; align-items: center; height: 14px; gap: 6px; padding-left: 3px; }
.chip { width: 19px; height: 12px; border: 2px solid #111; background: #111; box-shadow: inset 0 0 0 2px #fff; flex: none; }
.editor b { flex: 1; }
.editor button { width: 15px; height: 14px; border: 1px solid #aaa; background: #eee; display: grid; place-items: center; }
.bar { flex: none; width: 17px; background: #f0f0f0; display: flex; flex-direction: column; align-items: center; padding: 6px 0; border-left: 1px solid #e0e0e0; }
.bar i.up, .bar i.down { width: 6px; height: 3px; background: #666; }
.bar .down { margin-top: auto; }
.grip { width: 14px; height: 36px; margin-top: 9px; border: 1px solid #aaa; border-radius: 1px; background: repeating-linear-gradient(#777 0 1px, transparent 1px 3px) center / 6px 8px no-repeat, linear-gradient(90deg, #f4f4f4, #d0d0d0); }
.grip.long { height: 132px; margin-top: 7px; }
.hint { height: 57px; margin-top: 3px; border: 1px solid #aaa; }

.menu { position: absolute; top: 100%; left: -3px; right: -1px; height: 289px; display: flex; background: #fff; border: 1px solid #888; overflow: hidden; color: #222; }
.options { flex: 1; min-width: 0; }
.options button { width: 100%; height: 18px; display: grid; grid-template-columns: 100%; align-items: center; padding: 0 3px 0 1px; }
.options button:nth-child(4n) { height: 19px; }
.options button > * { grid-area: 1 / 1; }
.options svg { width: 15px; height: 13px; margin-left: 10px; }
.options span { height: 14px; padding-left: 50px; border: 1px dashed #bbb; overflow: hidden; white-space: nowrap; text-align: left; font: 9px/12px "Liberation Serif", serif; }
.options .plain { justify-items: center; font: 10px "Liberation Sans", sans-serif; }
.options .s10 span { font-size: 10px; }
.options .s11 span { font-size: 11px; }
.options .sans span { font-family: "Liberation Sans", sans-serif; }
.options .bold span { font-weight: 700; }
.options .ital span { font-style: italic; }
.options .center span { text-align: center; }
.options .right span { text-align: right; }
.menu .bar { padding: 8px 0 6px; }
.menu .grip { margin-top: 6px; }
.ring { position: absolute; left: 79px; top: -3px; }

.backdrop { flex: none; height: 22px; display: grid; grid-template-columns: 121px 622px 1fr; background: linear-gradient(#4c4c4c, #4c4c4c) 0 10px / 100% 1px no-repeat, #606060; border-bottom: 2px solid #ddd; }
.backdrop i { border-right: 1px solid #4c4c4c; }
```
